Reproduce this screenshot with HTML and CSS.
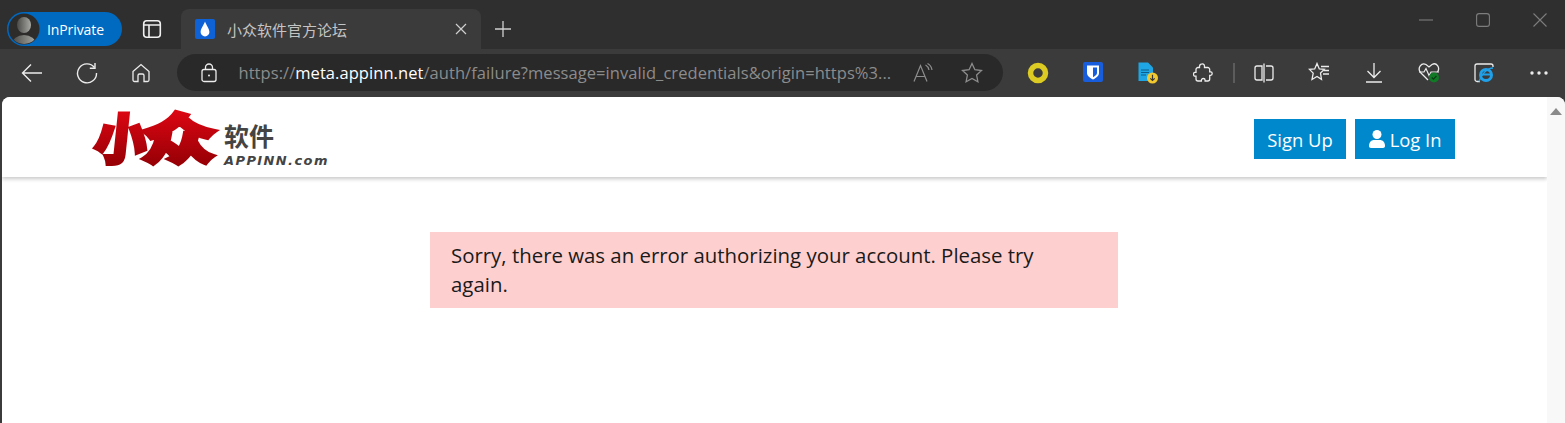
FILE: index.html
```html
<!DOCTYPE html>
<html>
<head>
  <meta charset="utf-8">
  <title>小众软件官方论坛</title>
  <link rel="stylesheet" href="styles.css">
</head>
<body>
  <div class="tabstrip">
    <div class="inprivate">
      <svg class="avatar" width="32" height="32" viewBox="0 0 32 32">
        <defs>
          <linearGradient id="skin" x1="0" y1="0" x2="1" y2="0">
            <stop offset="0" stop-color="#4a4a48"/>
            <stop offset="1" stop-color="#a8a8a4"/>
          </linearGradient>
          <clipPath id="round"><circle cx="16" cy="16" r="15"/></clipPath>
        </defs>
        <circle cx="16" cy="16" r="15.500" fill="#2e2c2b"/>
        <g clip-path="url(#round)">
          <ellipse cx="16" cy="12" rx="7" ry="8" fill="url(#skin)"/>
          <ellipse cx="16" cy="31" rx="12" ry="9" fill="url(#skin)"/>
        </g>
      </svg>
      <span class="inprivate-label">InPrivate</span>
    </div>
    <div class="tab-toggle">
      <svg width="20" height="20" viewBox="0 0 20 20" fill="none" stroke="#f0f0f0" stroke-width="1.600">
        <rect x="1.700" y="1.700" width="16.600" height="16.600" rx="3"/>
        <path d="M2 6h16M7 6v12"/>
      </svg>
    </div>
    <div class="tab">
      <svg class="favicon" width="20" height="20" viewBox="0 0 20 20">
        <rect width="20" height="20" rx="2" fill="#0f62d6"/>
        <path d="M10 2.500C8.600 6.500 5.600 9.500 5.600 13a4.400 4.400 0 0 0 8.800 0C14.400 9.500 11.400 6.500 10 2.500z" fill="#fff"/>
      </svg>
      <span class="tab-title">小众软件官方论坛</span>
      <svg width="12" height="12" viewBox="0 0 12 12" stroke="#cfcfcf" stroke-width="1.200">
        <path d="M1 1l10 10M11 1L1 11"/>
      </svg>
    </div>
    <div class="new-tab">
      <svg width="18" height="18" viewBox="0 0 18 18" stroke="#d0d0d0" stroke-width="1.300">
        <path d="M9 1v16M1 9h16"/>
      </svg>
    </div>
    <div class="window-controls">
      <svg width="14" height="14" viewBox="0 0 14 14" stroke="#7d7d7d" stroke-width="1.100" fill="none">
        <path d="M0 7h14"/>
      </svg>
      <svg width="14" height="14" viewBox="0 0 14 14" stroke="#7d7d7d" stroke-width="1.100" fill="none">
        <rect x="0.600" y="0.600" width="12.800" height="12.800" rx="2.500"/>
      </svg>
      <svg width="14" height="14" viewBox="0 0 14 14" stroke="#7d7d7d" stroke-width="1.100" fill="none">
        <path d="M0.500 0.500l13 13M13.500 0.500l-13 13"/>
      </svg>
    </div>
  </div>

  <div class="toolbar">
    <div class="slot">
      <svg width="22" height="20" viewBox="0 0 22 20" fill="none" stroke="#ececec" stroke-width="1.400">
        <path d="M21 10H1.500M10 1.500L1.500 10l8.500 8.500"/>
      </svg>
    </div>
    <div class="slot">
      <svg width="22" height="22" viewBox="0 0 22 22" fill="none" stroke="#ececec" stroke-width="1.400">
        <path d="M18.500 5.500A9.500 9.500 0 1 0 20.500 11"/>
        <path d="M19 1v5.200h-5.200"/>
      </svg>
    </div>
    <div class="slot">
      <svg width="20" height="20" viewBox="0 0 20 20" fill="none" stroke="#ececec" stroke-width="1.300">
        <path d="M2 8.500L10 1.500l8 7V17a1.500 1.500 0 0 1-1.500 1.500H13V12.500a1.500 1.500 0 0 0-1.500-1.500h-3A1.500 1.500 0 0 0 7 12.500v6H3.500A1.500 1.500 0 0 1 2 17z"/>
      </svg>
    </div>
    <div class="address">
      <svg class="lock" width="16" height="20" viewBox="0 0 16 20" fill="none" stroke="#ececec" stroke-width="1.300">
        <rect x="1" y="6.500" width="14" height="12" rx="2"/>
        <path d="M4.500 6.500V4.500a3.500 3.500 0 0 1 7 0v2"/>
        <circle cx="8" cy="12.500" r="1" fill="#ececec" stroke="none"/>
      </svg>
      <span class="url"><span class="url-dim">https://</span><span class="url-host">meta.appinn.net</span><span class="url-dim">/auth/failure?message=invalid_credentials&amp;origin=https%3...</span></span>
      <span class="read-aloud">
        <svg width="20" height="20" viewBox="0 0 20 20" fill="none" stroke="#8d8d8d" stroke-width="1.200">
          <path d="M1 18.500L7.500 2.500l6.500 16M3.200 13.500h8.600"/>
          <path d="M12.500 2c2 1 3 2.500 3.500 5M14.500 0.500c2.500 1.200 4 3.500 4.500 6.500"/>
        </svg>
      </span>
      <span class="star">
        <svg width="22" height="21" viewBox="0 0 22 21" fill="none" stroke="#8d8d8d" stroke-width="1.300">
          <path d="M11 1.500l2.900 6.200 6.600.8-4.900 4.600 1.300 6.600L11 16.500l-5.900 3.200 1.300-6.600-4.900-4.600 6.600-.8z"/>
        </svg>
      </span>
    </div>
    <div class="extensions">
      <div class="ext-slot">
        <svg width="22" height="22" viewBox="0 0 22 22" fill="none">
          <circle cx="11" cy="11" r="7.500" stroke="#dccb22" stroke-width="5.500"/>
        </svg>
      </div>
      <div class="ext-slot">
        <svg width="20" height="21" viewBox="0 0 20 21">
          <rect width="20" height="20" rx="2" fill="#175ddc"/>
          <path d="M4 3.500h12v7.500c0 3-3 5-6 6.500-3-1.500-6-3.500-6-6.500z" fill="#fff"/>
          <path d="M10 5.500h4v5.500c0 1.800-2 3-4 4.200z" fill="#175ddc"/>
        </svg>
      </div>
      <div class="ext-slot">
        <svg width="20" height="22" viewBox="0 0 20 22">
          <path d="M0.500 0.500h9.500l5 5V19H0.500z" fill="#1fa5e3"/>
          <path d="M3 8h8M3 10.500h8M3 13h5" stroke="#0c5f8c" stroke-width="1.100"/>
          <circle cx="14.500" cy="16" r="5.500" fill="#f2c92e"/>
          <path d="M14.500 12.800v5.500M12.300 16.300l2.200 2.200 2.200-2.200" stroke="#39393a" stroke-width="1.200" fill="none"/>
        </svg>
      </div>
      <div class="ext-slot">
        <svg width="20" height="20" viewBox="0 0 20 20" fill="none" stroke="#ececec" stroke-width="1.300">
          <path d="M8 1.200c1.500-.8 3.500 0 3.500 2V4.500h3.200a2 2 0 0 1 2 2v2.300h1c2 0 2 3.500 0 3.500h-1V16a2 2 0 0 1-2 2h-2.600v-.8c0-2.300-3.700-2.300-3.700 0v.8H5a2 2 0 0 1-2-2v-2.800H2c-2 0-2-3.800 0-3.800h1V6.500a2 2 0 0 1 2-2h1.500V3.200c0-.8.500-1.500 1.500-2z"/>
        </svg>
      </div>
      <div class="separator"></div>
      <div class="ext-slot">
        <svg width="20" height="20" viewBox="0 0 20 20" fill="none" stroke="#ececec" stroke-width="1.300">
          <path d="M8 3H3a2 2 0 0 0-2 2v10a2 2 0 0 0 2 2h5zM12 3h5a2 2 0 0 1 2 2v10a2 2 0 0 1-2 2h-5M10 0.500v19"/>
        </svg>
      </div>
      <div class="ext-slot">
        <svg width="22" height="21" viewBox="0 0 22 21" fill="none" stroke="#ececec" stroke-width="1.300">
          <path d="M9 1.500l2.300 5.500 5 .4-3.800 3.700 1 6.300-4.500-2.900-5 3 1.200-6.400-3.700-3.700 5.200-.4z"/>
          <path d="M13 4.500h8M15.500 8.500h5.500M15 12h6"/>
        </svg>
      </div>
      <div class="ext-slot">
        <svg width="18" height="20" viewBox="0 0 18 20" fill="none" stroke="#ececec" stroke-width="1.300">
          <path d="M9 0v14.500M2.500 8L9 14.500 15.500 8M1 19h16"/>
        </svg>
      </div>
      <div class="ext-slot">
        <svg width="22" height="21" viewBox="0 0 22 21" fill="none">
          <path d="M10 18L2.500 10.500C-1 6 3.500 0 8 2.500l3 2.500 3-2.500c4.500-2.500 8.500 3 5.500 7.500" stroke="#ececec" stroke-width="1.300"/>
          <path d="M1 10h5l2-3.500 3 7 2-3.500h8" stroke="#ececec" stroke-width="1.200"/>
          <circle cx="16" cy="15.500" r="5" fill="#117a27"/>
          <path d="M13.800 15.500l1.600 1.700 3-3.200" stroke="#0b3d15" stroke-width="1.200"/>
        </svg>
      </div>
      <div class="ext-slot">
        <svg width="20" height="20" viewBox="0 0 20 20" fill="none">
          <path d="M6 18.500H3a2 2 0 0 1-2-2V3a2 2 0 0 1 2-2h14a2 2 0 0 1 2 2v1" stroke="#ececec" stroke-width="1.300"/>
          <circle cx="12" cy="12" r="5.500" stroke="#1fa0e8" stroke-width="3"/>
          <path d="M8 11.500h8" stroke="#1fa0e8" stroke-width="2"/>
          <path d="M5 18.500C7 12 13 5 19 5" stroke="#1fa0e8" stroke-width="1.300"/>
        </svg>
      </div>
      <div class="ext-slot">
        <svg width="18" height="4" viewBox="0 0 18 4" fill="#ececec">
          <circle cx="2" cy="2" r="1.700"/><circle cx="9" cy="2" r="1.700"/><circle cx="16" cy="2" r="1.700"/>
        </svg>
      </div>
    </div>
  </div>

  <div class="viewport">
    <div class="page">
      <header class="site-header">
        <svg class="logo" width="244" height="80" viewBox="-8 -14 244 80">
          <defs>
            <linearGradient id="redUser" gradientUnits="userSpaceOnUse" x1="0" y1="-48" x2="0" y2="5">
              <stop offset="0" stop-color="#dc0612"/>
              <stop offset="1" stop-color="#980006"/>
            </linearGradient>
          </defs>
          <text class="logo-mark" transform="translate(0 47.500) skewX(-6) scale(0.960 1)" fill="url(#redUser)" stroke="url(#redUser)" stroke-width="4">小</text>
          <text class="logo-mark" transform="translate(48 47.500) scale(1.400 1)" fill="url(#redUser)" stroke="url(#redUser)" stroke-width="4">众</text>
          <text class="logo-cn" x="131" y="35">软件</text>
          <text class="logo-en" x="131" y="54">APPINN.com</text>
        </svg>
        <div class="header-buttons">
          <a class="btn">Sign Up</a>
          <a class="btn">
            <svg width="16" height="18" viewBox="0 0 16 18" fill="#fff">
              <circle cx="8" cy="4.500" r="4.500"/>
              <path d="M0 16c0-4 2.500-6 5-6h6c2.500 0 5 2 5 6 0 1.200-.8 2-2 2H2c-1.200 0-2-.8-2-2z"/>
            </svg>
            Log In
          </a>
        </div>
      </header>
      <main class="content">
        <div class="alert">Sorry, there was an error authorizing your account. Please try again.</div>
      </main>
    </div>
    <div class="scrollbar">
      <svg width="12" height="7" viewBox="0 0 12 7" fill="#8a8a8a"><path d="M6 0l6 7H0z"/></svg>
    </div>
  </div>
</body>
</html>
```

FILE: styles.css
```css
* {
  box-sizing: border-box;
}

html, body {
  height: 100%;
}

body {
  margin: 0;
  overflow: hidden;
  display: flex;
  flex-direction: column;
  background-color: #3b3b3b;
  font-family: "Open Sans", "Noto Sans CJK SC", sans-serif;
}

/* tab strip */
.tabstrip {
  height: 49px;
  flex: none;
  display: flex;
  align-items: flex-end;
  background-color: #2f2f2f;
  padding-left: 7px;
}

.inprivate {
  width: 115px;
  height: 34px;
  margin-bottom: 3px;
  display: flex;
  align-items: center;
  gap: 7px;
  padding-left: 1px;
  border-radius: 17px;
  background-color: #0069c0;
  color: #fff;
}

.inprivate-label {
  font-size: 14px;
  letter-spacing: -0.1px;
}

.tab-toggle {
  width: 59px;
  height: 40px;
  display: flex;
  align-items: center;
  justify-content: center;
}

.tab {
  width: 300px;
  height: 40px;
  display: flex;
  align-items: center;
  padding: 0 14px;
  border-radius: 8px 8px 0 0;
  background-color: #3b3b3b;
}

.favicon {
  flex: none;
}

.tab-title {
  flex: 1;
  margin-left: 12px;
  font-size: 15px;
  color: #c4c4c4;
  font-family: "Noto Sans CJK SC", sans-serif;
}

.new-tab {
  width: 44px;
  height: 40px;
  display: flex;
  align-items: center;
  justify-content: center;
}

.window-controls {
  margin-left: auto;
  align-self: flex-start;
  display: flex;
  gap: 43px;
  padding: 13px 18px 0 0;
}

/* toolbar */
.toolbar {
  height: 48px;
  flex: none;
  display: flex;
  align-items: center;
  padding: 0 0 1px 5px;
  background-color: #3b3b3b;
}

.slot {
  width: 54.500px;
  height: 36px;
  flex: none;
  display: flex;
  align-items: center;
  justify-content: center;
}

.address {
  width: 826px;
  height: 37px;
  margin-left: 8px;
  flex: none;
  display: flex;
  align-items: center;
  padding-left: 24px;
  border-radius: 19px;
  background-color: #292929;
}

.lock {
  flex: none;
}

.url {
  width: 654px;
  margin-left: 22px;
  flex: none;
  font-size: 16.500px;
  letter-spacing: 0.060px;
  white-space: nowrap;
}

.url-dim {
  color: #8c8c8c;
}

.url-host {
  color: #fff;
}

.read-aloud {
  margin-left: 20px;
  display: flex;
}

.star {
  margin-left: 28px;
  display: flex;
}

.extensions {
  display: flex;
  align-items: center;
  margin-left: 7.500px;
}

.ext-slot {
  width: 55px;
  height: 36px;
  flex: none;
  display: flex;
  align-items: center;
  justify-content: center;
}

.separator {
  width: 2px;
  height: 20px;
  margin: 0 1.500px 0 2.500px;
  background-color: #5c5c5c;
}

/* page */
.viewport {
  flex: 1;
  min-height: 0;
  display: flex;
  margin-left: 2px;
  border-radius: 8px 8px 0 0;
  overflow: hidden;
  background-color: #fff;
}

.page {
  flex: 1;
  min-width: 0;
}

.scrollbar {
  width: 18px;
  flex: none;
  display: flex;
  justify-content: center;
  align-items: flex-start;
  padding-top: 11px;
  background-color: #f8f8f8;
}

.site-header {
  height: 80px;
  display: flex;
  align-items: flex-start;
  justify-content: space-between;
  padding: 22px 92px 0 83px;
  background-color: #fff;
  box-shadow: 0 2px 4px rgba(0, 0, 0, 0.22);
}

.logo {
  flex: none;
  margin: -22px 0;
}

.logo-mark {
  font-family: "Noto Sans CJK SC", sans-serif;
  font-weight: 900;
  font-size: 54px;
}

.logo-cn {
  font-family: "Noto Sans CJK SC", sans-serif;
  font-weight: 700;
  font-size: 25px;
  fill: #444;
}

.logo-en {
  font-family: "DejaVu Sans", sans-serif;
  font-weight: 700;
  font-style: italic;
  font-size: 13px;
  letter-spacing: 1.400px;
  fill: #444;
}

.header-buttons {
  display: flex;
  gap: 9px;
}

.btn {
  height: 40px;
  display: flex;
  align-items: center;
  gap: 5px;
  padding: 0 13.500px;
  background-color: #0088cc;
  color: #fff;
  font-size: 18.400px;
}

.content {
  padding: 55px 1px 0 0;
}

.alert {
  width: 688px;
  margin: 0 auto;
  padding: 9px 60px 9px 21px;
  background-color: #fdcfcf;
  color: #1a1a1a;
  font-size: 20.400px;
  line-height: 29px;
}
```
